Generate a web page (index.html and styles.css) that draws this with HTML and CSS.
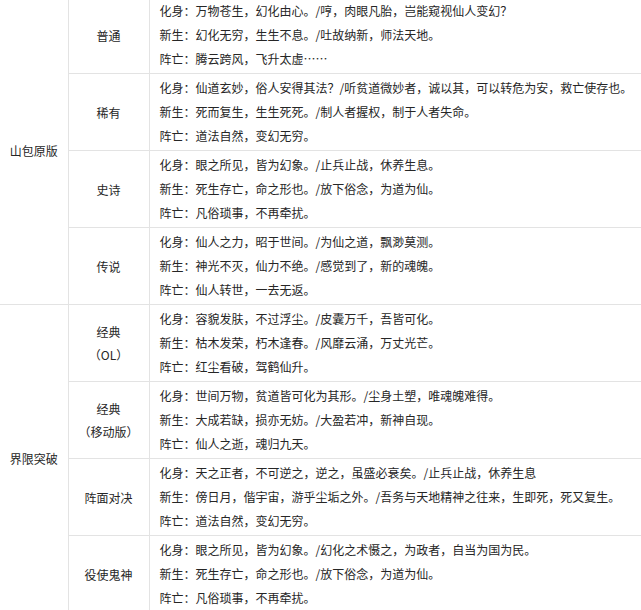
FILE: index.html
```html
<!DOCTYPE html>
<html lang="zh-CN">
<head>
<meta charset="utf-8">
<title>皮肤台词</title>
<link rel="stylesheet" href="styles.css">
</head>
<body>
<table class="lines">
  <colgroup>
    <col class="c-group">
    <col class="c-tier">
    <col class="c-text">
  </colgroup>
  <tbody>
    <tr>
      <td class="group" rowspan="4">山包原版</td>
      <td class="tier">普通</td>
      <td class="text">
        <div>化身：万物苍生，幻化由心。/哼，肉眼凡胎，岂能窥视仙人变幻？</div>
        <div>新生：幻化无穷，生生不息。/吐故纳新，师法天地。</div>
        <div>阵亡：腾云跨风，飞升太虚……</div>
      </td>
    </tr>
    <tr>
      <td class="tier">稀有</td>
      <td class="text">
        <div>化身：仙道玄妙，俗人安得其法？/听贫道微妙者，诚以其，可以转危为安，救亡使存也。</div>
        <div>新生：死而复生，生生死死。/制人者握权，制于人者失命。</div>
        <div>阵亡：道法自然，变幻无穷。</div>
      </td>
    </tr>
    <tr>
      <td class="tier">史诗</td>
      <td class="text">
        <div>化身：眼之所见，皆为幻象。/止兵止战，休养生息。</div>
        <div>新生：死生存亡，命之形也。/放下俗念，为道为仙。</div>
        <div>阵亡：凡俗琐事，不再牵扰。</div>
      </td>
    </tr>
    <tr>
      <td class="tier">传说</td>
      <td class="text">
        <div>化身：仙人之力，昭于世间。/为仙之道，飘渺莫测。</div>
        <div>新生：神光不灭，仙力不绝。/感觉到了，新的魂魄。</div>
        <div>阵亡：仙人转世，一去无返。</div>
      </td>
    </tr>
    <tr>
      <td class="group" rowspan="4">界限突破</td>
      <td class="tier">经典<br>（OL）</td>
      <td class="text">
        <div>化身：容貌发肤，不过浮尘。/皮囊万千，吾皆可化。</div>
        <div>新生：枯木发荣，朽木逢春。/风靡云涌，万丈光芒。</div>
        <div>阵亡：红尘看破，驾鹤仙升。</div>
      </td>
    </tr>
    <tr>
      <td class="tier">经典<br>（移动版）</td>
      <td class="text">
        <div>化身：世间万物，贫道皆可化为其形。/尘身土塑，唯魂魄难得。</div>
        <div>新生：大成若缺，损亦无妨。/大盈若冲，新神自现。</div>
        <div>阵亡：仙人之逝，魂归九天。</div>
      </td>
    </tr>
    <tr>
      <td class="tier">阵面对决</td>
      <td class="text">
        <div>化身：天之正者，不可逆之，逆之，虽盛必衰矣。/止兵止战，休养生息</div>
        <div>新生：傍日月，偕宇宙，游乎尘垢之外。/吾务与天地精神之往来，生即死，死又复生。</div>
        <div>阵亡：道法自然，变幻无穷。</div>
      </td>
    </tr>
    <tr>
      <td class="tier">役使鬼神</td>
      <td class="text">
        <div>化身：眼之所见，皆为幻象。/幻化之术慑之，为政者，自当为国为民。</div>
        <div>新生：死生存亡，命之形也。/放下俗念，为道为仙。</div>
        <div>阵亡：凡俗琐事，不再牵扰。</div>
      </td>
    </tr>
  </tbody>
</table>
</body>
</html>
```

FILE: styles.css
```css
html, body {
  margin: 0;
  padding: 0;
  background: #ffffff;
}

body {
  font-family: "Noto Sans CJK SC", "Microsoft YaHei", sans-serif;
  font-size: 12px;
  color: #262626;
}

.lines {
  border-collapse: collapse;
  table-layout: fixed;
  width: 660px;
  margin-top: -4px;
}

.c-group { width: 68px; }
.c-tier { width: 81px; }

.lines td {
  border: 1px solid #e3e3e3;
  padding: 0;
  vertical-align: middle;
}

.lines tr > td:first-child {
  border-left: none;
}

.group {
  text-align: center;
  font-size: 12px;
}

.tier {
  text-align: center;
  line-height: 23px;
  font-size: 12px;
}

.lines td.text {
  padding: 2px 0 2px 10px;
  line-height: 24px;
  white-space: nowrap;
  overflow: hidden;
}
```
